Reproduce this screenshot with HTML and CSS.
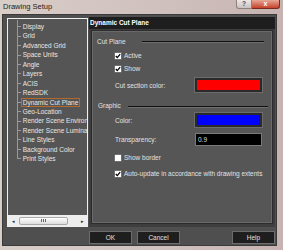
FILE: index.html
```html
<!DOCTYPE html>
<html>
<head>
    <title>Drawing Setup</title>
    <link rel="stylesheet" href="styles.css">
</head>
<body>
    <div class="window">
        <div class="titlebar">
            <span class="title">Drawing Setup</span>
            <div class="controls">
                <span class="btn-help">?</span>
                <span class="btn-close">x</span>
            </div>
        </div>

        <div class="client">
            <div class="main">
                <div class="tree">
                    <ul class="items">
                        <li><span>Display</span></li>
                        <li><span>Grid</span></li>
                        <li><span>Advanced Grid</span></li>
                        <li><span>Space Units</span></li>
                        <li><span>Angle</span></li>
                        <li><span>Layers</span></li>
                        <li><span>ACIS</span></li>
                        <li><span>RedSDK</span></li>
                        <li><span class="selected">Dynamic Cut Plane</span></li>
                        <li><span>Geo-Location</span></li>
                        <li><span>Render Scene Environment</span></li>
                        <li><span>Render Scene Luminance</span></li>
                        <li><span>Line Styles</span></li>
                        <li><span>Background Color</span></li>
                        <li><span>Print Styles</span></li>
                    </ul>
                    <div class="hscroll">
                        <span class="arrow">&#9666;</span>
                        <span class="thumb"><span class="grip"></span></span>
                        <span class="arrow right">&#9656;</span>
                    </div>
                </div>

                <div class="page">
                    <div class="page-title">Dynamic Cut Plane</div>
                    <div class="panel">
                        <div class="group-head first">
                            <span>Cut Plane</span>
                            <span class="rule"></span>
                        </div>
                        <div class="check row-active">
                            <span class="box"><svg width="6" height="6" viewBox="0 0 6 6"><polyline points="0.8,3 2.3,4.6 5.2,1.2" fill="none" stroke="#000" stroke-width="1.3"/></svg></span>
                            Active
                        </div>
                        <div class="check row-show">
                            <span class="box"><svg width="6" height="6" viewBox="0 0 6 6"><polyline points="0.8,3 2.3,4.6 5.2,1.2" fill="none" stroke="#000" stroke-width="1.3"/></svg></span>
                            Show
                        </div>
                        <div class="field row-cut">
                            <span>Cut section color:</span>
                            <span class="swatch red"></span>
                        </div>

                        <div class="group-head second">
                            <span>Graphic</span>
                            <span class="rule"></span>
                        </div>
                        <div class="field row-color">
                            <span>Color:</span>
                            <span class="swatch blue"></span>
                        </div>
                        <div class="field row-transp">
                            <span>Transparency:</span>
                            <span class="input">0.9</span>
                        </div>
                        <div class="check row-border">
                            <span class="box"></span>
                            Show border
                        </div>
                        <div class="check row-auto">
                            <span class="box"><svg width="6" height="6" viewBox="0 0 6 6"><polyline points="0.8,3 2.3,4.6 5.2,1.2" fill="none" stroke="#000" stroke-width="1.3"/></svg></span>
                            Auto-update in accordance with drawing extents
                        </div>
                    </div>
                </div>
            </div>

            <div class="buttons">
                <div class="button">OK</div>
                <div class="button">Cancel</div>
                <div class="button help">Help</div>
            </div>
        </div>
    </div>
</body>
</html>
```

FILE: styles.css
```css
body {
    margin: 0;
    font-family: "Liberation Sans", Arial, sans-serif;
}
.window {
    width: 283px;
    height: 250px;
    background: linear-gradient(90deg, #d9cdc8, #cfc0bd 60%, #c7b3b1);
    display: flex;
    flex-direction: column;
    overflow: hidden;
}
.titlebar {
    height: 14px;
    display: flex;
    align-items: flex-start;
}
.title {
    font-size: 7.5px;
    line-height: 8px;
    color: #222;
    margin: 3px 0 0 3px;
}
.controls {
    display: flex;
    margin-left: auto;
    margin-right: 3px;
}
.btn-help {
    width: 16px;
    height: 9px;
    box-sizing: border-box;
    background: linear-gradient(#eee8e6, #cbc1be);
    border: 1px solid #8e807d;
    border-top: 0;
    border-radius: 0 0 0 3px;
    font-size: 6.5px;
    line-height: 8px;
    color: #3c4a66;
    text-align: center;
    font-weight: bold;
}
.btn-close {
    width: 28px;
    height: 9px;
    box-sizing: border-box;
    background: linear-gradient(#e6a897, #c6412b);
    border: 1px solid #7b2a20;
    border-top: 0;
    border-left: 0;
    border-radius: 0 0 3px 0;
    font-size: 7px;
    line-height: 7px;
    color: #fff;
    text-align: center;
    font-weight: bold;
}
.client {
    flex: 1;
    margin: 0 6px 4px 2px;
    background: #4f4f4f;
    border: 1px solid #3a3a3a;
    display: flex;
    flex-direction: column;
}
.main {
    display: flex;
    height: 210px;
    margin-top: 2px;
}

/* tree */
.tree {
    width: 81px;
    height: 209px;
    margin: 1px 0 0 4px;
    box-sizing: border-box;
    border: 1px solid #f0f0f0;
    background: #555;
    display: flex;
    flex-direction: column;
}
.items {
    flex: 1;
    list-style: none;
    margin: 0;
    padding: 3px 0 0 0;
    overflow: hidden;
    background: linear-gradient(#9a9a9a, #9a9a9a) no-repeat 9px 1px / 1px 138px;
}
.items li {
    height: 9.45px;
    line-height: 9.45px;
    padding-left: 14.7px;
    font-size: 6.5px;
    color: #e8e8e8;
    white-space: nowrap;
    background: linear-gradient(#9a9a9a, #9a9a9a) no-repeat 9px 50% / 4px 1px;
}
.items .selected {
    border: 1px solid #b4682a;
    margin-left: -2px;
    padding: 0 1px;
}
.hscroll {
    height: 11px;
    background: #ededed;
    display: flex;
    align-items: center;
}
.arrow {
    width: 10px;
    font-size: 5px;
    color: #222;
    text-align: center;
}
.arrow.right {
    margin-left: auto;
}
.thumb {
    width: 49px;
    height: 8px;
    margin-left: 1px;
    box-sizing: border-box;
    border: 1px solid #a9a9a9;
    border-radius: 2px;
    background: linear-gradient(#fdfdfd, #dedede);
    display: flex;
    align-items: center;
    justify-content: center;
}
.grip {
    width: 5px;
    height: 3px;
    background: repeating-linear-gradient(90deg, #666 0 1px, transparent 1px 2px);
}

/* page */
.page {
    width: 186px;
    margin-left: 1px;
    background: #3e3e3e;
    display: flex;
    flex-direction: column;
}
.page-title {
    height: 12px;
    line-height: 12px;
    background: #1e1e1e;
    color: #fff;
    font-size: 6.5px;
    font-weight: bold;
    padding-left: 1px;
}
.panel {
    height: 194px;
    margin: 1px 2px 0 2px;
    box-sizing: border-box;
    border: 1px solid #2c2c2c;
    box-shadow: inset 0 0 0 1px #6a6a6a;
    background: #565656;
    color: #e2e2e2;
    font-size: 6.5px;
}
.group-head {
    height: 10px;
    display: flex;
    align-items: center;
    padding-left: 5px;
}
.rule {
    flex: 1;
    height: 1px;
    margin-top: 2px;
    background: #111;
    border-bottom: 1px solid #6e6e6e;
}
.group-head.first {
    margin-top: 5px;
}
.group-head.first .rule {
    margin-left: 16px;
    margin-right: 8px;
}
.group-head.second {
    margin-top: 8.5px;
    padding-left: 6px;
}
.group-head.second .rule {
    margin-left: 7px;
    margin-right: 4px;
}
.check {
    height: 10px;
    display: flex;
    align-items: center;
    padding-left: 23px;
}
.box {
    width: 6px;
    height: 6px;
    margin-right: 3px;
    background: #fff;
    box-shadow: 0 0 0 0.5px #888;
    display: flex;
}
.row-active { margin-top: 4.5px; }
.row-show { margin-top: 3px; }
.row-border { margin-top: 7px; }
.row-auto { margin-top: 6.3px; }

.field {
    display: grid;
    grid-template-columns: 80px 67px;
    align-items: center;
    padding-left: 23px;
}
.row-cut { margin-top: 4.5px; height: 14px; }
.row-color { margin-top: 2.5px; height: 14px; }
.row-transp { margin-top: 5.5px; height: 13px; }
.swatch {
    height: 14px;
    box-sizing: border-box;
    border: 2px solid #2a2a2a;
    box-shadow: 0 0 0 1px #6c6c6c;
}
.swatch.red { background: #ff0000; }
.swatch.blue { background: #0000ff; }
.input {
    height: 13px;
    line-height: 11px;
    box-sizing: border-box;
    border: 1px solid #7a7a7a;
    background: #000;
    color: #ddd;
    padding-left: 2px;
}

/* buttons */
.buttons {
    display: flex;
    margin-top: 4px;
    padding-left: 86px;
}
.button {
    width: 43px;
    height: 13px;
    box-sizing: border-box;
    border: 1px solid #6c6c6c;
    background: #1e1e1e;
    color: #e0e0e0;
    font-size: 6.5px;
    line-height: 11px;
    text-align: center;
    margin-right: 5px;
}
.button.help {
    margin-left: auto;
    margin-right: 1px;
}
```
